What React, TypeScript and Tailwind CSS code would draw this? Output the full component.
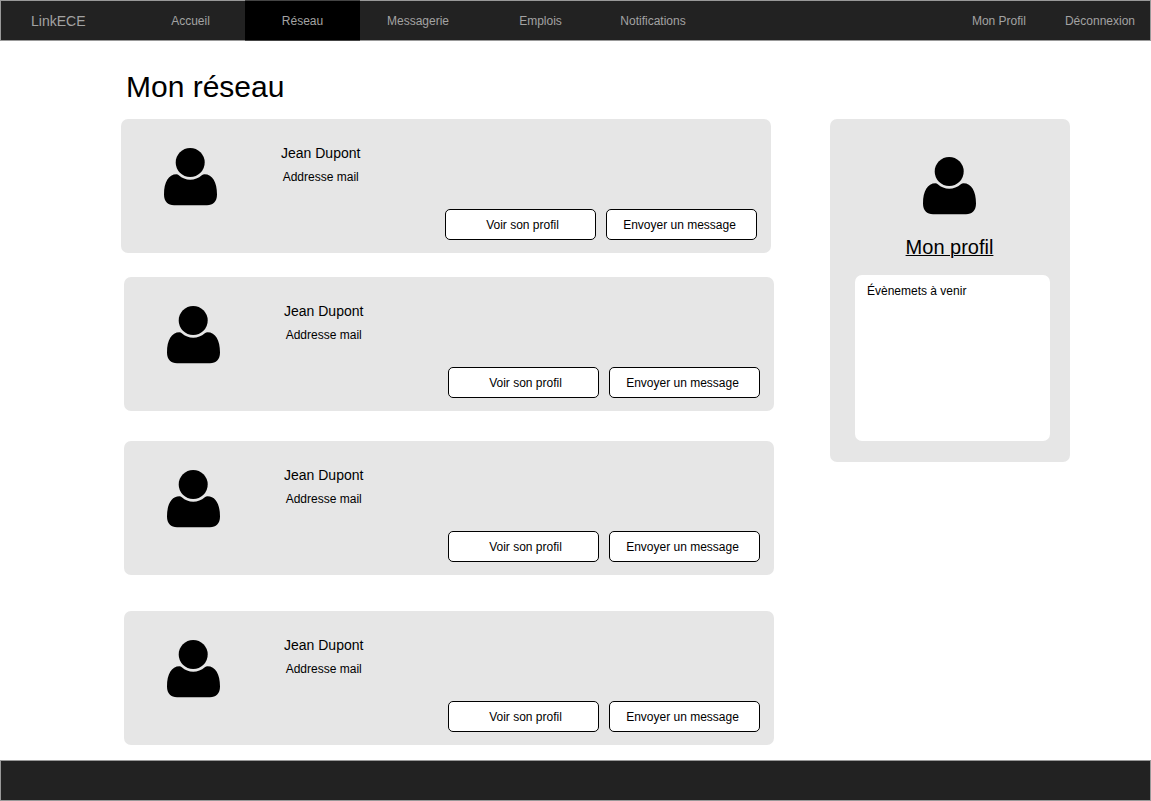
import React from "react";

type Contact = { id: number; name: string; mail: string; spacing: string };

const contacts: Contact[] = [
  { id: 1, name: "Jean Dupont", mail: "Addresse mail", spacing: "mr-[3px]" },
  { id: 2, name: "Jean Dupont", mail: "Addresse mail", spacing: "ml-[3px] mt-6" },
  { id: 3, name: "Jean Dupont", mail: "Addresse mail", spacing: "ml-[3px] mt-[30px]" },
  { id: 4, name: "Jean Dupont", mail: "Addresse mail", spacing: "ml-[3px] mt-9" },
];

const navLinks = [
  { label: "Accueil", width: "w-[109px]" },
  { label: "Réseau", width: "w-[115px]", active: true },
  { label: "Messagerie", width: "w-[116px]" },
  { label: "Emplois", width: "w-[129px]" },
  { label: "Notifications", width: "w-24" },
];

function PersonIcon() {
  return (
    <svg viewBox="0 0 53 58" className="h-[58px] w-[53px] shrink-0" aria-hidden="true">
      <circle cx="26.2" cy="14.5" r="14.5" />
      <path d="M12.500 26.200C4.500 26.200 0 34 0 46.500C0 53.500 4 57.300 10 57.300H43C49 57.300 53 53.500 53 46.500C53 34 48.500 26.200 40.500 26.200C39.500 26.200 38.700 26.600 37.800 27.300C34.500 30.200 30.500 31.800 26.200 31.800C22 31.800 18 30.200 14.800 27.300C14 26.600 13.300 26.200 12.500 26.200Z" />
    </svg>
  );
}

function ContactCard({ contact }: { contact: Contact }) {
  const button = "h-[31px] w-[151px] rounded-[5px] border border-black bg-white text-xs";
  return (
    <li className={`rounded-[7px] bg-[#e6e6e6] pt-[22px] pr-3.5 pb-[13px] pl-[43px] ${contact.spacing}`}>
      <div className="flex items-start gap-16">
        <div className="pt-[7px]">
          <PersonIcon />
        </div>
        <div className="text-center leading-6">
          <h2 className="text-sm leading-6">{contact.name}</h2>
          <p className="text-xs leading-6">{contact.mail}</p>
        </div>
      </div>
      <div className="mt-[3px] flex justify-end gap-2.5">
        <button type="button" className={`${button} pl-1`}>Voir son profil</button>
        <button type="button" className={`${button} pr-1`}>Envoyer un message</button>
      </div>
    </li>
  );
}

export default function App() {
  return (
    <div className="flex min-h-screen flex-col bg-white font-['Liberation_Sans',Arial,sans-serif] text-black">
      <nav className="flex h-[41px] items-stretch border border-[#999] bg-[#222] text-xs text-[#a3a3a3]">
        <a href="#" className="flex w-[135px] items-center pl-[30px] text-sm">LinkECE</a>
        {navLinks.map((link) => (
          <a
            key={link.label}
            href="#"
            aria-current={link.active ? "page" : undefined}
            className={`flex items-center justify-center ${link.width} ${
              link.active ? "-my-px border-y border-[#444] bg-black" : ""
            }`}
          >
            {link.label}
          </a>
        ))}
        <div className="ml-auto flex items-center gap-[39px] pr-[15px]">
          <a href="#">Mon Profil</a>
          <a href="#">Déconnexion</a>
        </div>
      </nav>

      <main className="grow pt-7 pr-[81px] pb-[15px] pl-[121px]">
        <h1 className="pl-[5px] text-3xl leading-9">Mon réseau</h1>
        <div className="mt-3.5 flex items-start gap-14">
          <ul className="grow">
            {contacts.map((contact) => (
              <ContactCard key={contact.id} contact={contact} />
            ))}
          </ul>
          <aside className="w-60 shrink-0 rounded-[7px] bg-[#e6e6e6] pt-[38px] pr-5 pb-[21px] pl-[25px]">
            <div className="flex flex-col items-center pr-[6px]">
              <PersonIcon />
              <a href="#" className="mt-[18px] text-xl leading-7 underline decoration-1">Mon profil</a>
            </div>
            <section className="mt-3.5 min-h-[166px] rounded-[7px] bg-white px-3 py-1">
              <h2 className="text-xs leading-6">Évènemets à venir</h2>
            </section>
          </aside>
        </div>
      </main>

      <footer className="h-[41px] border border-[#999] bg-[#222]" />
    </div>
  );
}
